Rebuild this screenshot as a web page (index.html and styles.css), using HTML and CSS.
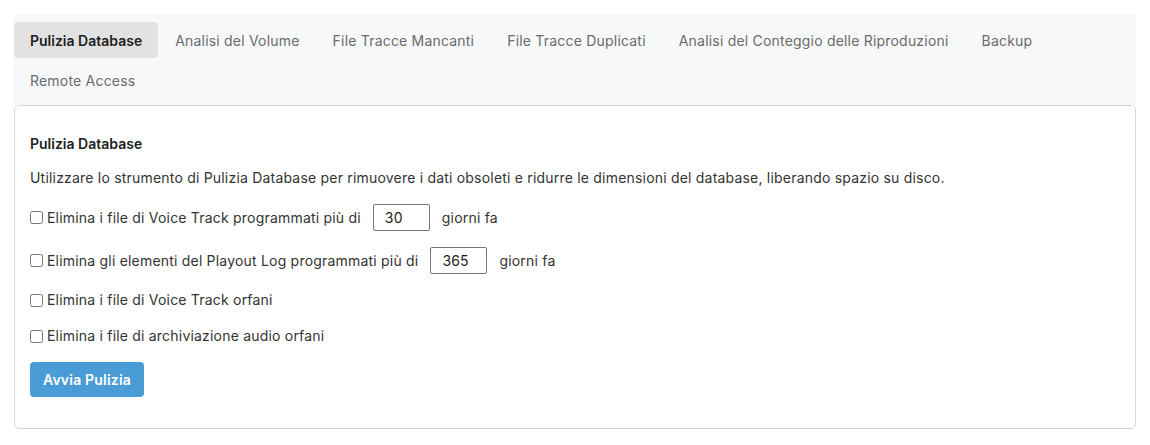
FILE: index.html
```html
<!DOCTYPE html>
<html lang="it">
<head>
<meta charset="utf-8">
<title>Pulizia Database</title>
<link rel="stylesheet" href="styles.css">
</head>
<body>
<div class="page">
  <nav class="tabs">
    <a class="tab active">Pulizia Database</a>
    <a class="tab">Analisi del Volume</a>
    <a class="tab">File Tracce Mancanti</a>
    <a class="tab">File Tracce Duplicati</a>
    <a class="tab">Analisi del Conteggio delle Riproduzioni</a>
    <a class="tab">Backup</a>
    <a class="tab">Remote Access</a>
  </nav>
  <section class="card">
    <h2 class="card-title">Pulizia Database</h2>
    <p class="desc">Utilizzare lo strumento di Pulizia Database per rimuovere i dati obsoleti e ridurre le dimensioni del database, liberando spazio su disco.</p>
    <div class="row">
      <label class="check"><input type="checkbox">Elimina i file di Voice Track programmati più di</label>
      <input class="num" type="text" value="30">
      <span class="suffix">giorni fa</span>
    </div>
    <div class="row">
      <label class="check"><input type="checkbox">Elimina gli elementi del Playout Log programmati più di</label>
      <input class="num" type="text" value="365">
      <span class="suffix">giorni fa</span>
    </div>
    <div class="row">
      <label class="check"><input type="checkbox">Elimina i file di Voice Track orfani</label>
    </div>
    <div class="row">
      <label class="check"><input type="checkbox">Elimina i file di archiviazione audio orfani</label>
    </div>
    <button class="btn" type="button">Avvia Pulizia</button>
  </section>
</div>
</body>
</html>
```
FILE: styles.css
```css
* { box-sizing: border-box; }
html, body { margin: 0; padding: 0; background: #fff; }
body {
  font-family: Inter, "Noto Sans", sans-serif;
  font-size: 14px;
  letter-spacing: 0.2px;
  color: #222;
  padding: 14px;
}
.page { width: 1122px; }
.tabs {
  display: flex;
  flex-wrap: wrap;
  column-gap: 1px;
  row-gap: 4px;
  background: #f7f8fa;
  padding: 8px 0 7px;
}
.tab {
  display: flex;
  align-items: center;
  height: 36px;
  padding: 0 16px;
  font-size: 14px;
  color: #6b6b6b;
  border-radius: 4px;
  cursor: pointer;
}
.tab.active {
  background: #e2e2e2;
  color: #1f1f1f;
  font-weight: 600;
  letter-spacing: 0;
}
.card {
  border: 1px solid #d6d6d6;
  border-radius: 5px;
  padding: 27px 15px 15px;
}
.card-title {
  margin: 0 0 13px;
  font-size: 14px;
  font-weight: 600;
  letter-spacing: 0;
  line-height: 22px;
  color: #222;
}
.desc {
  margin: 0 0 16px;
  font-size: 14px;
  line-height: 20px;
  color: #333;
}
.row {
  display: flex;
  align-items: center;
  min-height: 20px;
  margin-bottom: 16px;
  font-size: 14px;
  color: #333;
}
.check {
  display: flex;
  align-items: center;
  line-height: 20px;
}
.check input {
  width: 13px;
  height: 13px;
  margin: 0 4px 0 0;
}
.num {
  width: 57px;
  height: 27px;
  margin: 0 12px;
  padding: 0 11px;
  border: 1px solid #767676;
  border-radius: 2px;
  font-family: Inter, "Noto Sans", sans-serif;
  font-size: 14px;
  letter-spacing: 0.2px;
  color: #222;
}
.suffix { line-height: 20px; }
.btn {
  display: block;
  margin: 1px 0 16px;
  height: 35px;
  padding: 0 13px;
  border: none;
  border-radius: 4px;
  background: #4a9cd6;
  color: #fff;
  font-family: Inter, "Noto Sans", sans-serif;
  font-size: 14px;
  letter-spacing: 0.2px;
  font-weight: 600;
}
```
